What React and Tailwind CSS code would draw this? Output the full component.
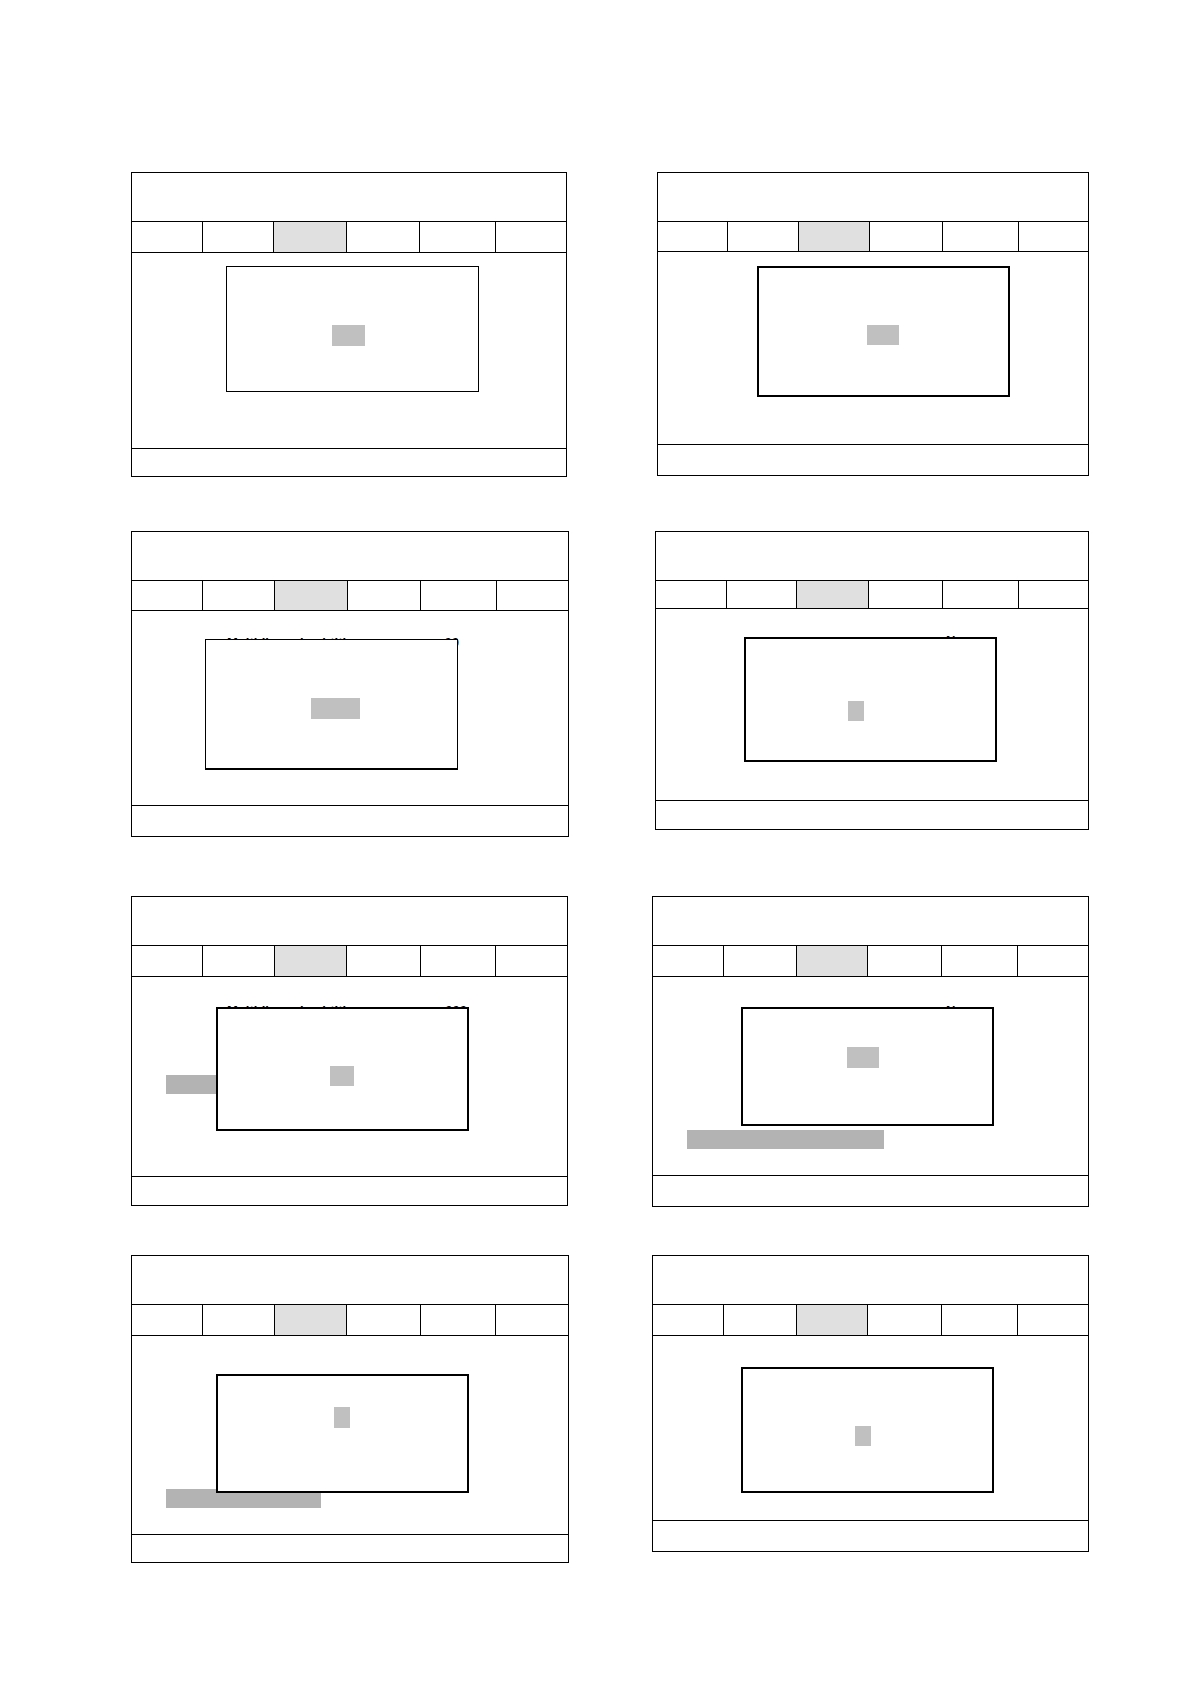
import React from "react";

// one screen mock-up per panel, numbers measured off the sheet
const rows = [
  {
    h: "h-[359px]",
    gap: "ml-[90px]",
    panels: [
      {
        w: "w-[436px] h-[305px]", header: "h-[49px]", tabs: "h-[31px]", footer: "h-[28px]",
        cells: ["w-[71px]", "w-[71px]", "w-[73px]", "w-[73px]", "w-[76px]"],
        box: "left-[94px] top-[13px] w-[253px] h-[126px] border border-black",
        chip: "ml-[105px] mt-[58px] w-[33px] h-[21px]",
      },
      {
        w: "w-[432px] h-[304px]", header: "h-[49px]", tabs: "h-[30px]", footer: "h-[31px]",
        cells: ["w-[70px]", "w-[71px]", "w-[71px]", "w-[73px]", "w-[76px]"],
        box: "left-[99px] top-[14px] w-[253px] h-[131px] border-2 border-black",
        chip: "ml-[108px] mt-[57px] w-[32px] h-[20px]",
      },
    ],
  },
  {
    h: "h-[365px]",
    gap: "ml-[86px]",
    panels: [
      {
        w: "w-[438px] h-[306px]", header: "h-[49px]", tabs: "h-[30px]", footer: "h-[31px]",
        cells: ["w-[71px]", "w-[72px]", "w-[73px]", "w-[73px]", "w-[76px]"],
        box: "left-[73px] top-[28px] w-[253px] h-[131px] border border-b-2 border-black",
        chip: "ml-[105px] mt-[58px] w-[49px] h-[21px]",
        peek: { pos: "left-[95px] top-[25px] w-[232px]", left: "Multi-lingual subtitle", right: "00" },
      },
      {
        w: "w-[434px] h-[299px]", header: "h-[49px]", tabs: "h-[28px]", footer: "h-[29px]",
        cells: ["w-[71px]", "w-[70px]", "w-[72px]", "w-[74px]", "w-[76px]"],
        box: "left-[88px] top-[28px] w-[253px] h-[125px] border-2 border-black",
        chip: "ml-[102px] mt-[62px] w-[16px] h-[20px]",
        peek: { pos: "left-[290px] top-[25px] w-[20px]", left: "N", right: "" },
      },
    ],
  },
  {
    h: "h-[359px]",
    gap: "ml-[84px]",
    panels: [
      {
        w: "w-[437px] h-[310px]", header: "h-[49px]", tabs: "h-[31px]", footer: "h-[29px]",
        cells: ["w-[71px]", "w-[72px]", "w-[72px]", "w-[74px]", "w-[75px]"],
        box: "left-[84px] top-[30px] w-[253px] h-[124px] border-2 border-black",
        chip: "ml-[112px] mt-[57px] w-[24px] h-[20px]",
        bar: "ml-[34px] mt-[98px] w-[60px] h-[19px]",
        peek: { pos: "left-[95px] top-[27px] w-[240px]", left: "Multi-lingual subtitle", right: "000" },
      },
      {
        w: "w-[437px] h-[311px]", header: "h-[49px]", tabs: "h-[31px]", footer: "h-[31px]",
        cells: ["w-[71px]", "w-[73px]", "w-[71px]", "w-[74px]", "w-[76px]"],
        box: "left-[88px] top-[30px] w-[253px] h-[119px] border-2 border-black",
        chip: "ml-[104px] mt-[38px] w-[32px] h-[21px]",
        bar: "ml-[34px] mt-[153px] w-[197px] h-[19px]",
        peek: { pos: "left-[293px] top-[27px] w-[20px]", left: "N", right: "" },
      },
    ],
  },
  {
    h: "h-[310px]",
    gap: "ml-[83px]",
    panels: [
      {
        w: "w-[438px] h-[308px]", header: "h-[49px]", tabs: "h-[31px]", footer: "h-[28px]",
        cells: ["w-[71px]", "w-[72px]", "w-[72px]", "w-[74px]", "w-[75px]"],
        box: "left-[84px] top-[38px] w-[253px] h-[119px] border-2 border-black",
        chip: "ml-[116px] mt-[31px] w-[16px] h-[21px]",
        bar: "ml-[34px] mt-[153px] w-[155px] h-[19px]",
      },
      {
        w: "w-[437px] h-[297px]", header: "h-[49px]", tabs: "h-[31px]", footer: "h-[31px]",
        cells: ["w-[71px]", "w-[73px]", "w-[71px]", "w-[74px]", "w-[76px]"],
        box: "left-[88px] top-[31px] w-[253px] h-[126px] border-2 border-black",
        chip: "ml-[112px] mt-[57px] w-[16px] h-[20px]",
      },
    ],
  },
];

function Screen({ p, className = "" }) {
  return (
    <div className={`${p.w} ${className} shrink-0 flex flex-col border border-black bg-white`}>
      <div className={`${p.header} shrink-0 border-b border-black`} />
      <div className={`${p.tabs} shrink-0 flex border-b border-black`}>
        {p.cells.map((c, i) => (
          <div key={i} className={`${c} border-r border-black ${i === 2 ? "bg-[#e0e0e0]" : ""}`} />
        ))}
        <div className="flex-1" />
      </div>
      <div className="relative flex-1 overflow-hidden">
        {p.peek && (
          <div
            className={`absolute ${p.peek.pos} flex justify-between text-[13px] leading-none font-bold text-black`}
            style={{ fontFamily: '"Liberation Sans", Arial, sans-serif' }}
          >
            <span>{p.peek.left}</span>
            <span>{p.peek.right}</span>
          </div>
        )}
        {p.bar && <div className={`${p.bar} bg-[#b3b3b3]`} />}
        <div className={`absolute ${p.box} bg-white`}>
          <div className={`${p.chip} bg-[#c0c0c0]`} />
        </div>
      </div>
      <div className={`${p.footer} shrink-0 border-t border-black`} />
    </div>
  );
}

export default function App() {
  return (
    <div className="w-[1191px] h-[1684px] bg-white pt-[172px] pl-[131px]">
      {rows.map((r, i) => (
        <div key={i} className={`${r.h} flex items-start`}>
          <Screen p={r.panels[0]} />
          <Screen p={r.panels[1]} className={r.gap} />
        </div>
      ))}
    </div>
  );
}
